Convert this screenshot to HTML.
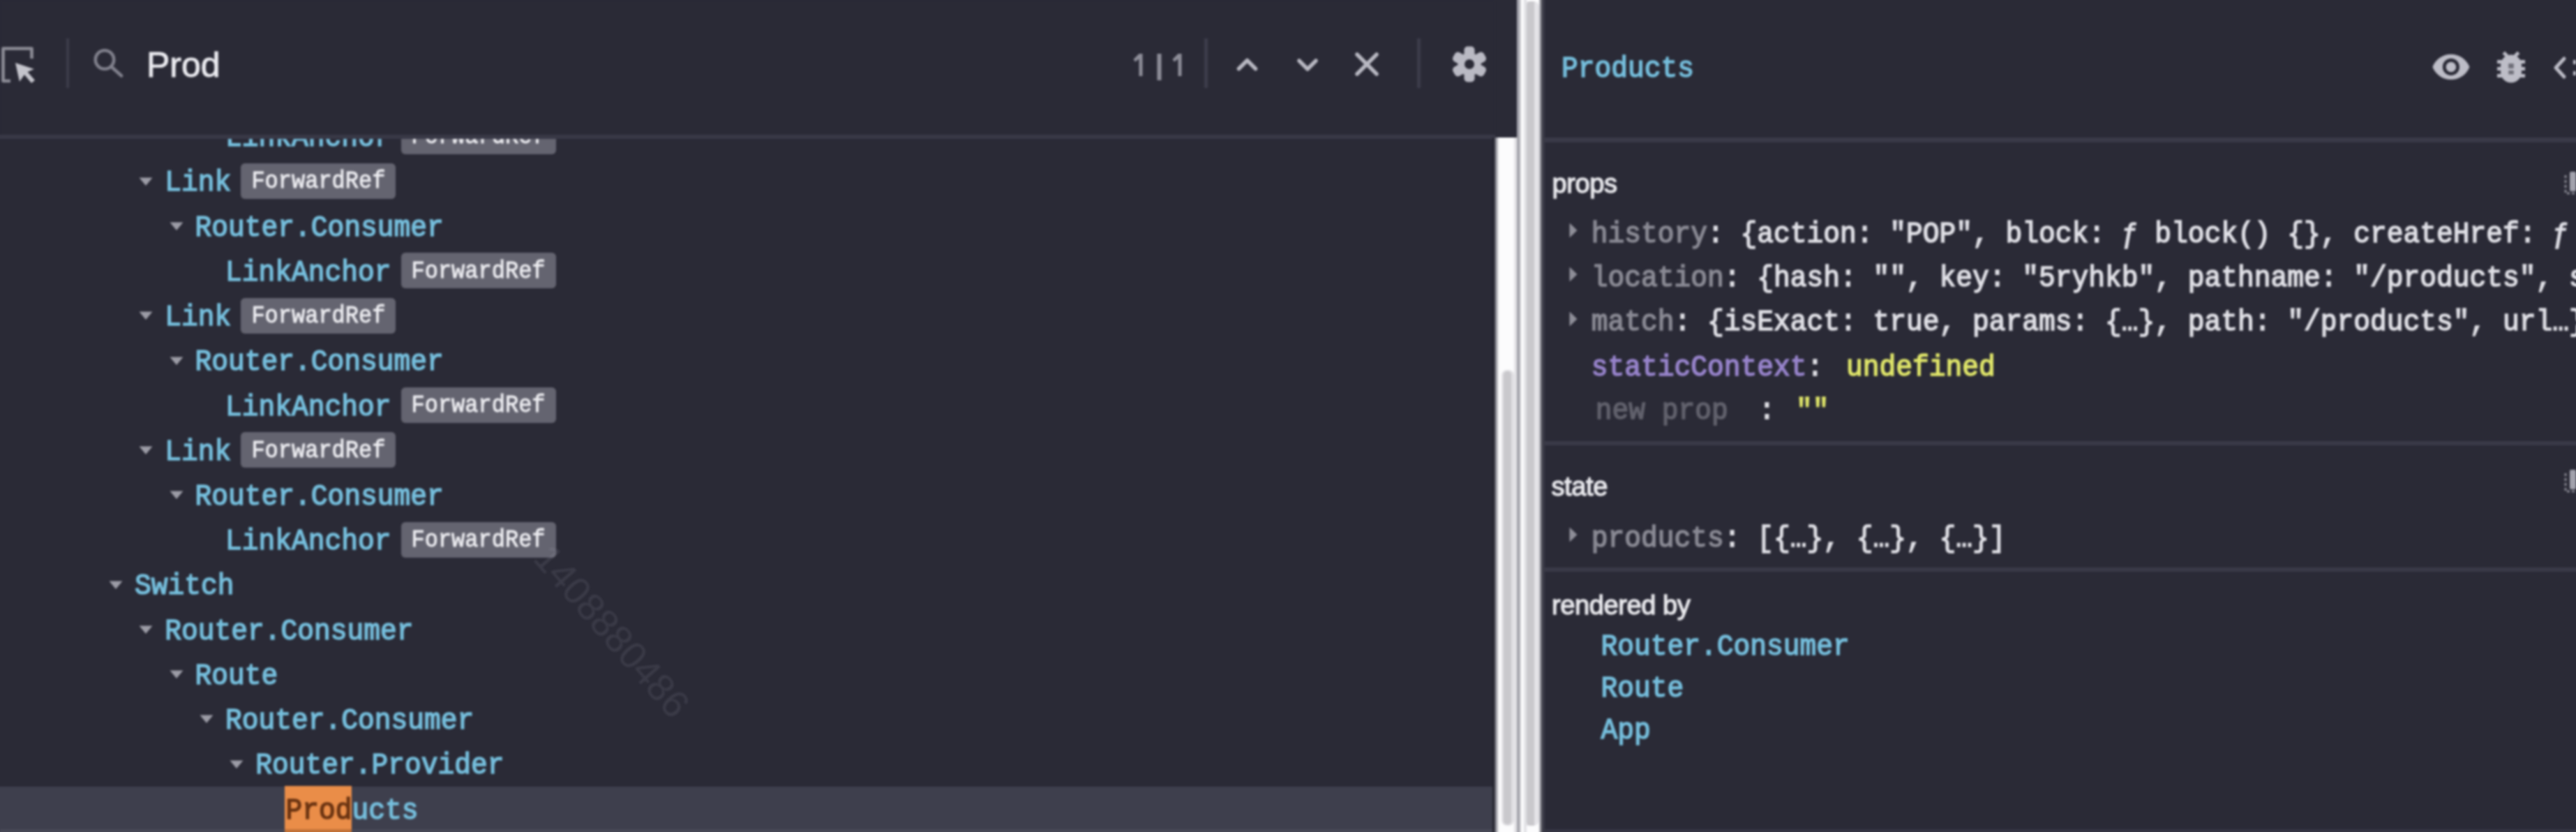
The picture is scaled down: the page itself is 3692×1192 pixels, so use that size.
<!DOCTYPE html>
<html><head><meta charset="utf-8"><style>
html,body{margin:0;padding:0;}
body{width:3692px;height:1192px;overflow:hidden;background:#2a2a36;position:relative;}
#wrap{position:absolute;left:0;top:0;width:3692px;height:1192px;filter:blur(1.4px);}
.t,.r{position:absolute;}
.t{white-space:pre;}
.m{font-family:"Liberation Mono",monospace;transform:scaleY(1.07);-webkit-text-stroke:1.5px currentColor;}
.s{font-family:"Liberation Sans",sans-serif;}
.badge{position:absolute;width:222px;height:51px;background:#646470;border-radius:6px;}
</style></head><body><div id="wrap">
<div class="r" style="left:-30px;top:1127px;width:2173px;height:103px;background:#3e3f4d;"></div>
<div class="t m" style="left:322.9px;top:179.1px;font-size:39.6px;line-height:39.6px;color:#76bfdd;transform-origin:0 30.1px;">LinkAnchor</div>
<div class="badge" style="left:574.5px;top:169.6px;"></div>
<div class="t m" style="left:589.5px;top:181.0px;font-size:32px;line-height:32px;color:#ececf0;transform-origin:0 24.3px;transform:scaleY(1.1);-webkit-text-stroke:0.9px currentColor;">ForwardRef</div>
<svg class="r" style="left:198.3px;top:252.6px" width="22" height="16"><path d="M1.5 1.5 L20.5 1.5 L11 13 Z" fill="#9c9ca6"/></svg>
<div class="t m" style="left:236.3px;top:243.3px;font-size:39.6px;line-height:39.6px;color:#76bfdd;transform-origin:0 30.1px;">Link</div>
<div class="badge" style="left:345.4px;top:233.8px;"></div>
<div class="t m" style="left:360.4px;top:245.2px;font-size:32px;line-height:32px;color:#ececf0;transform-origin:0 24.3px;transform:scaleY(1.1);-webkit-text-stroke:0.9px currentColor;">ForwardRef</div>
<svg class="r" style="left:241.6px;top:316.8px" width="22" height="16"><path d="M1.5 1.5 L20.5 1.5 L11 13 Z" fill="#9c9ca6"/></svg>
<div class="t m" style="left:279.6px;top:307.6px;font-size:39.6px;line-height:39.6px;color:#76bfdd;transform-origin:0 30.1px;">Router.Consumer</div>
<div class="t m" style="left:322.9px;top:371.8px;font-size:39.6px;line-height:39.6px;color:#76bfdd;transform-origin:0 30.1px;">LinkAnchor</div>
<div class="badge" style="left:574.5px;top:362.3px;"></div>
<div class="t m" style="left:589.5px;top:373.7px;font-size:32px;line-height:32px;color:#ececf0;transform-origin:0 24.3px;transform:scaleY(1.1);-webkit-text-stroke:0.9px currentColor;">ForwardRef</div>
<svg class="r" style="left:198.3px;top:445.3px" width="22" height="16"><path d="M1.5 1.5 L20.5 1.5 L11 13 Z" fill="#9c9ca6"/></svg>
<div class="t m" style="left:236.3px;top:436.0px;font-size:39.6px;line-height:39.6px;color:#76bfdd;transform-origin:0 30.1px;">Link</div>
<div class="badge" style="left:345.4px;top:426.5px;"></div>
<div class="t m" style="left:360.4px;top:437.9px;font-size:32px;line-height:32px;color:#ececf0;transform-origin:0 24.3px;transform:scaleY(1.1);-webkit-text-stroke:0.9px currentColor;">ForwardRef</div>
<svg class="r" style="left:241.6px;top:509.5px" width="22" height="16"><path d="M1.5 1.5 L20.5 1.5 L11 13 Z" fill="#9c9ca6"/></svg>
<div class="t m" style="left:279.6px;top:500.2px;font-size:39.6px;line-height:39.6px;color:#76bfdd;transform-origin:0 30.1px;">Router.Consumer</div>
<div class="t m" style="left:322.9px;top:564.5px;font-size:39.6px;line-height:39.6px;color:#76bfdd;transform-origin:0 30.1px;">LinkAnchor</div>
<div class="badge" style="left:574.5px;top:555.0px;"></div>
<div class="t m" style="left:589.5px;top:566.3px;font-size:32px;line-height:32px;color:#ececf0;transform-origin:0 24.3px;transform:scaleY(1.1);-webkit-text-stroke:0.9px currentColor;">ForwardRef</div>
<svg class="r" style="left:198.3px;top:638.0px" width="22" height="16"><path d="M1.5 1.5 L20.5 1.5 L11 13 Z" fill="#9c9ca6"/></svg>
<div class="t m" style="left:236.3px;top:628.7px;font-size:39.6px;line-height:39.6px;color:#76bfdd;transform-origin:0 30.1px;">Link</div>
<div class="badge" style="left:345.4px;top:619.2px;"></div>
<div class="t m" style="left:360.4px;top:630.6px;font-size:32px;line-height:32px;color:#ececf0;transform-origin:0 24.3px;transform:scaleY(1.1);-webkit-text-stroke:0.9px currentColor;">ForwardRef</div>
<svg class="r" style="left:241.6px;top:702.2px" width="22" height="16"><path d="M1.5 1.5 L20.5 1.5 L11 13 Z" fill="#9c9ca6"/></svg>
<div class="t m" style="left:279.6px;top:692.9px;font-size:39.6px;line-height:39.6px;color:#76bfdd;transform-origin:0 30.1px;">Router.Consumer</div>
<div class="t m" style="left:322.9px;top:757.2px;font-size:39.6px;line-height:39.6px;color:#76bfdd;transform-origin:0 30.1px;">LinkAnchor</div>
<div class="badge" style="left:574.5px;top:747.6px;"></div>
<div class="t m" style="left:589.5px;top:759.0px;font-size:32px;line-height:32px;color:#ececf0;transform-origin:0 24.3px;transform:scaleY(1.1);-webkit-text-stroke:0.9px currentColor;">ForwardRef</div>
<svg class="r" style="left:155.0px;top:830.7px" width="22" height="16"><path d="M1.5 1.5 L20.5 1.5 L11 13 Z" fill="#9c9ca6"/></svg>
<div class="t m" style="left:193.0px;top:821.4px;font-size:39.6px;line-height:39.6px;color:#76bfdd;transform-origin:0 30.1px;">Switch</div>
<svg class="r" style="left:198.3px;top:894.9px" width="22" height="16"><path d="M1.5 1.5 L20.5 1.5 L11 13 Z" fill="#9c9ca6"/></svg>
<div class="t m" style="left:236.3px;top:885.6px;font-size:39.6px;line-height:39.6px;color:#76bfdd;transform-origin:0 30.1px;">Router.Consumer</div>
<svg class="r" style="left:241.6px;top:959.1px" width="22" height="16"><path d="M1.5 1.5 L20.5 1.5 L11 13 Z" fill="#9c9ca6"/></svg>
<div class="t m" style="left:279.6px;top:949.9px;font-size:39.6px;line-height:39.6px;color:#76bfdd;transform-origin:0 30.1px;">Route</div>
<svg class="r" style="left:284.9px;top:1023.4px" width="22" height="16"><path d="M1.5 1.5 L20.5 1.5 L11 13 Z" fill="#9c9ca6"/></svg>
<div class="t m" style="left:322.9px;top:1014.1px;font-size:39.6px;line-height:39.6px;color:#76bfdd;transform-origin:0 30.1px;">Router.Consumer</div>
<svg class="r" style="left:328.2px;top:1087.6px" width="22" height="16"><path d="M1.5 1.5 L20.5 1.5 L11 13 Z" fill="#9c9ca6"/></svg>
<div class="t m" style="left:366.2px;top:1078.3px;font-size:39.6px;line-height:39.6px;color:#76bfdd;transform-origin:0 30.1px;">Router.Provider</div>
<div class="r" style="left:407.5px;top:1126px;width:96px;height:100px;background:#ea8d48"></div>
<div class="t m" style="left:409.5px;top:1142.5px;font-size:39.6px;line-height:39.6px;color:#76bfdd;transform-origin:0 30.1px;"><span style="color:#6b3412">Prod</span>ucts</div>
<div class="r" style="left:0px;top:1188px;width:2143px;height:42px;background:#474856;"></div>
<div class="r" style="left:407.5px;top:1188px;width:96px;height:40px;background:#c27238"></div>
<div class="t s" style="left:797px;top:771px;font-size:55px;line-height:55px;color:rgba(210,210,230,0.10);transform:rotate(49deg);transform-origin:0 0;">1408880486</div>
<div class="r" style="left:0px;top:0px;width:2143px;height:193px;background:#2a2a36;"></div>
<div class="r" style="left:-30px;top:193px;width:2173px;height:6px;background:#383846;"></div>
<svg class="r" style="left:0;top:60px" width="60" height="65"><path d="M15 56 L4.5 56 L4.5 9.5 L45.5 9.5 L45.5 24" fill="none" stroke="#8d8d97" stroke-width="4.6" stroke-linejoin="round"/><path d="M22 30 L49 39 L39.5 43 L50 55 L45 59 L35 47 L28 57 Z" fill="#c4c4cc"/></svg>
<div class="r" style="left:95px;top:55px;width:4px;height:71px;background:#3c3c4a;"></div>
<svg class="r" style="left:125px;top:62px" width="60" height="55"><circle cx="25" cy="23.5" r="13.2" fill="none" stroke="#80808c" stroke-width="4.6"/><path d="M34.5 33.5 L49 46.5" stroke="#80808c" stroke-width="4.8" stroke-linecap="round"/></svg>
<div class="t s" style="left:210.0px;top:68.4px;font-size:50px;line-height:50px;color:#ebebf0;-webkit-text-stroke:0.8px currentColor;">Prod</div>
<svg class="r" style="left:1610px;top:60px" width="100" height="70"><path d="M22.5 17 L27.5 17 L27.5 49 L22.5 49 L22.5 24.5 L17 28.5 L14.5 25 Z" fill="#8e8e99"/><rect x="48.5" y="17" width="6" height="38" fill="#8e8e99"/><path d="M78.5 17 L83.5 17 L83.5 49 L78.5 49 L78.5 24.5 L73 28.5 L70.5 25 Z" fill="#8e8e99"/></svg>
<div class="r" style="left:1726px;top:55px;width:5px;height:71px;background:#3c3c4a;"></div>
<svg class="r" style="left:1760px;top:60px" width="260" height="60"><path d="M15.5 38.5 L27.5 26.5 L39.5 38.5" fill="none" stroke="#b8b8c2" stroke-width="5.5" stroke-linecap="round" stroke-linejoin="round"/><path d="M102 27 L114 39 L126 27" fill="none" stroke="#b8b8c2" stroke-width="5.5" stroke-linecap="round" stroke-linejoin="round"/><path d="M185 18 L213 46 M213 18 L185 46" stroke="#b8b8c2" stroke-width="5.5" stroke-linecap="round"/></svg>
<div class="r" style="left:2031px;top:55px;width:5px;height:71px;background:#3c3c4a;"></div>
<svg class="r" style="left:2075.5px;top:62.2px" width="60" height="60"><g fill="#b9b9c3" transform="translate(30 30)"><circle r="16.5"/><rect x="-7.5" y="-25.5" width="15" height="51" rx="5"/><rect x="-7.5" y="-25.5" width="15" height="51" rx="5" transform="rotate(60)"/><rect x="-7.5" y="-25.5" width="15" height="51" rx="5" transform="rotate(120)"/></g><circle cx="30" cy="30" r="7" fill="#2a2a36"/></svg>
<div class="r" style="left:2139px;top:197px;width:3px;height:1033px;background:#24242e;"></div>
<div class="r" style="left:2142px;top:197px;width:2px;height:1033px;background:#6a6a74;"></div>
<div class="r" style="left:2144px;top:197px;width:2px;height:1033px;background:#a2a2aa;"></div>
<div class="r" style="left:2146px;top:197px;width:2px;height:1033px;background:#dadade;"></div>
<div class="r" style="left:2148px;top:197px;width:22px;height:1033px;background:#fcfcfd;"></div>
<div class="r" style="left:2170px;top:197px;width:4px;height:1033px;background:#e4e3e7;"></div>
<div class="r" style="left:2152px;top:530px;width:18px;height:653px;background:#e0dfe3;border-radius:8px"></div>
<div class="r" style="left:2155px;top:532px;width:10.5px;height:649px;background:#c9c8cc;border-radius:5px"></div>
<div class="r" style="left:2174px;top:-30px;width:40px;height:1260px;background:#fcfcfd;"></div>
<div class="r" style="left:2174px;top:-30px;width:4px;height:1260px;background:#a4a4ac;"></div>
<div class="r" style="left:2178px;top:-30px;width:2px;height:1260px;background:#d2d2d6;"></div>
<div class="r" style="left:2184px;top:-30px;width:4px;height:1260px;background:#e2e2e6;"></div>
<div class="r" style="left:2188px;top:2px;width:18px;height:1181px;background:#e4e3e7;border-radius:0 8px 8px 0"></div>
<div class="r" style="left:2188px;top:2px;width:10.5px;height:1181px;background:#c9c8cc;border-radius:5px 0 0 5px"></div>
<div class="r" style="left:2206px;top:-30px;width:2px;height:1260px;background:#b4b4bc;"></div>
<div class="r" style="left:2208px;top:-30px;width:2px;height:1260px;background:#6c6c74;"></div>
<div class="r" style="left:2210px;top:-30px;width:4px;height:1260px;background:#3b3b47;"></div>
<div class="t m" style="left:2238.0px;top:79.6px;font-size:39.6px;line-height:39.6px;color:#76bfdd;transform-origin:0 30.1px;">Products</div>
<div class="r" style="left:2214px;top:197px;width:1516px;height:7px;background:#3a3a48;"></div>
<svg class="r" style="left:3484px;top:67px" width="58" height="55" viewBox="0 0 24.07 22.82"><path d="M12 4.5C7 4.5 2.73 7.61 1 12c1.73 4.39 6 7.5 11 7.5s9.27-3.11 11-7.5c-1.73-4.39-6-7.5-11-7.5zM12 17c-2.76 0-5-2.24-5-5s2.24-5 5-5 5 2.24 5 5-2.24 5-5 5zm0-8c-1.66 0-3 1.34-3 3s1.34 3 3 3 3-1.34 3-3-1.34-3-3-3z" fill="#bdbdc7"/></svg>
<svg class="r" style="left:3569px;top:66px" width="60" height="60" viewBox="0 0 24 24"><path d="M20 8h-2.81c-.45-.78-1.07-1.45-1.82-1.96L17 4.41 15.59 3l-2.17 2.17C12.96 5.06 12.49 5 12 5c-.49 0-.96.06-1.41.17L8.41 3 7 4.41l1.62 1.63C7.88 6.55 7.26 7.220 6.81 8H4v2h2.09c-.05.33-.09.66-.09 1v1H4v2h2v1c0 .34.04.67.09 1H4v2h2.81c1.04 1.79 2.97 3 5.19 3s4.15-1.21 5.19-3H20v-2h-2.09c.05-.33.09-.66.09-1v-1h2v-2h-2v-1c0-.34-.04-.67-.09-1H20V8z" fill="#bdbdc7"/><rect x="10.5" y="10" width="3" height="2.8" fill="#6e6e78"/><rect x="10.5" y="14" width="3" height="2.2" fill="#6e6e78"/></svg>
<svg class="r" style="left:3655px;top:78px" width="37" height="38"><path d="M20 6 L8 19 L20 32" fill="none" stroke="#bdbdc7" stroke-width="5" stroke-linecap="round" stroke-linejoin="round"/><rect x="33" y="8" width="4" height="6" fill="#bdbdc7"/><rect x="33" y="24" width="4" height="6" fill="#bdbdc7"/></svg>
<div class="t s" style="left:2224.5px;top:243.7px;font-size:38px;line-height:38px;color:#e8e8ec;-webkit-text-stroke:1.3px currentColor;letter-spacing:-0.4px;">props</div>
<svg class="r" style="left:2248.0px;top:318.0px" width="14" height="24"><path d="M1.5 1.5 L12.5 12 L1.5 22.5 Z" fill="#8e8e98"/></svg>
<div class="t m" style="left:2280.8px;top:316.9px;font-size:39.6px;line-height:39.6px;color:#e0e0e6;transform-origin:0 30.1px;"><span style="color:#8a8a94">history</span>: {action: "POP", block: ƒ block() {}, createHref: ƒ</div>
<svg class="r" style="left:2248.0px;top:381.2px" width="14" height="24"><path d="M1.5 1.5 L12.5 12 L1.5 22.5 Z" fill="#8e8e98"/></svg>
<div class="t m" style="left:2280.8px;top:380.2px;font-size:39.6px;line-height:39.6px;color:#e0e0e6;transform-origin:0 30.1px;"><span style="color:#8a8a94">location</span>: {hash: "", key: "5ryhkb", pathname: "/products", s</div>
<svg class="r" style="left:2248.0px;top:444.5px" width="14" height="24"><path d="M1.5 1.5 L12.5 12 L1.5 22.5 Z" fill="#8e8e98"/></svg>
<div class="t m" style="left:2280.8px;top:443.4px;font-size:39.6px;line-height:39.6px;color:#e0e0e6;transform-origin:0 30.1px;"><span style="color:#8a8a94">match</span>: {isExact: true, params: {…}, path: "/products", url…}</div>
<div class="t m" style="left:2280.8px;top:508.1px;font-size:39.6px;line-height:39.6px;color:#e0e0e6;transform-origin:0 30.1px;"><span style="color:#9884cc">staticContext</span>:</div>
<div class="t m" style="left:2646.0px;top:508.1px;font-size:39.6px;line-height:39.6px;color:#e0e66a;transform-origin:0 30.1px;">undefined</div>
<div class="t m" style="left:2286.8px;top:569.9px;font-size:39.6px;line-height:39.6px;color:#62626d;transform-origin:0 30.1px;">new prop</div>
<div class="t m" style="left:2520.6px;top:569.9px;font-size:39.6px;line-height:39.6px;color:#e0e0e6;transform-origin:0 30.1px;">:</div>
<div class="t m" style="left:2574.0px;top:569.9px;font-size:39.6px;line-height:39.6px;color:#e0e66a;transform-origin:0 30.1px;">""</div>
<div class="r" style="left:2214px;top:632px;width:1516px;height:6px;background:#3a3a48;"></div>
<div class="t s" style="left:2223.5px;top:677.7px;font-size:38px;line-height:38px;color:#e8e8ec;-webkit-text-stroke:1.3px currentColor;letter-spacing:-0.4px;">state</div>
<svg class="r" style="left:2248.0px;top:754.0px" width="14" height="24"><path d="M1.5 1.5 L12.5 12 L1.5 22.5 Z" fill="#8e8e98"/></svg>
<div class="t m" style="left:2280.8px;top:752.9px;font-size:39.6px;line-height:39.6px;color:#e0e0e6;transform-origin:0 30.1px;"><span style="color:#8a8a94">products</span>: [{…}, {…}, {…}]</div>
<div class="r" style="left:2214px;top:813px;width:1516px;height:6px;background:#3a3a48;"></div>
<div class="t s" style="left:2224.0px;top:848.0px;font-size:38px;line-height:38px;color:#e8e8ec;-webkit-text-stroke:1.3px currentColor;letter-spacing:-0.4px;">rendered by</div>
<div class="t m" style="left:2294.5px;top:908.4px;font-size:39.6px;line-height:39.6px;color:#76bfdd;transform-origin:0 30.1px;">Router.Consumer</div>
<div class="t m" style="left:2294.5px;top:968.4px;font-size:39.6px;line-height:39.6px;color:#76bfdd;transform-origin:0 30.1px;">Route</div>
<div class="t m" style="left:2294.5px;top:1028.4px;font-size:39.6px;line-height:39.6px;color:#76bfdd;transform-origin:0 30.1px;">App</div>
<div class="r" style="left:2214px;top:1188px;width:1516px;height:42px;background:#363644;"></div>
<svg class="r" style="left:3674px;top:245px" width="18" height="40"><path d="M3 6 V32 H18" fill="none" stroke="#8a8a94" stroke-width="3" stroke-dasharray="4 3"/><rect x="9" y="1" width="9" height="28" rx="2" fill="#a2a2ac"/></svg>
<svg class="r" style="left:3674px;top:672px" width="18" height="40"><path d="M3 6 V32 H18" fill="none" stroke="#8a8a94" stroke-width="3" stroke-dasharray="4 3"/><rect x="9" y="1" width="9" height="28" rx="2" fill="#a2a2ac"/></svg>
</div></body></html>
